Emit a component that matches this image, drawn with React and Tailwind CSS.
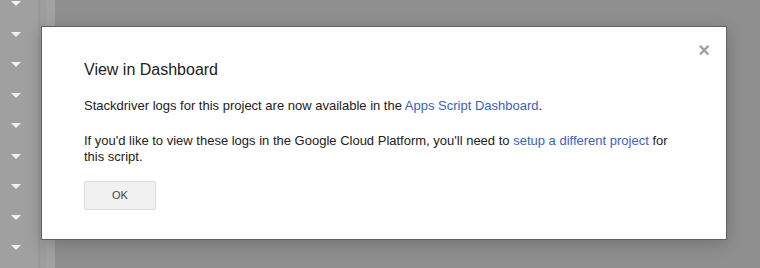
import React from 'react';

const Arrow = () => (
  <svg width="10" height="5" viewBox="0 0 10 5" className="block">
    <path d="M0 0 L10 0 L5 5 Z" fill="#f2f2f2" />
  </svg>
);

export default function App() {
  const rows = Array.from({ length: 9 });
  return (
    <div className="relative w-[760px] h-[268px] overflow-hidden bg-[#8f8f8f] flex" style={{ fontFamily: '"Liberation Sans", Arial, sans-serif' }}>
      {/* side strip behind the overlay */}
      <div className="w-[38px] h-full bg-[#a0a0a0] flex flex-col items-center pt-[1px] gap-[25.5px]">
        {rows.map((_, i) => (
          <div key={i} className="mr-[6px]"><Arrow /></div>
        ))}
      </div>
      <div className="w-[2px] h-full bg-[#989898]" />
      <div className="w-[6px] h-full bg-[#9d9d9d]" />
      <div className="w-[9px] h-full bg-[#a2a2a2]" />

      {/* dialog */}
      <div className="absolute left-[41px] top-[26px] w-[686px] h-[214px] bg-white border border-[#5f5f5f] shadow-[0_4px_16px_rgba(0,0,0,0.2)] px-[42px] pt-[33px]">
        <button className="absolute right-[16px] top-[13px] text-[#a0a0a0] text-[20px] leading-none font-bold">×</button>
        <h2 className="text-[16px] leading-[20px] text-[#222]">View in Dashboard</h2>
        <p className="mt-[18px] text-[13px] leading-[16px] text-[#222]">
          Stackdriver logs for this project are now available in the <a className="text-[#3b5fc0]">Apps Script Dashboard</a>.
        </p>
        <p className="mt-[19px] text-[13px] leading-[16px] text-[#222] w-[600px]">
          If you'd like to view these logs in the Google Cloud Platform, you'll need to <a className="text-[#3b5fc0]">setup a different project</a> for this script.
        </p>
        <button className="mt-[16px] w-[72px] h-[29px] bg-[#f1f1f1] border border-[#dcdcdc] rounded-[2px] text-[11px] text-[#444]">OK</button>
      </div>
    </div>
  );
}
